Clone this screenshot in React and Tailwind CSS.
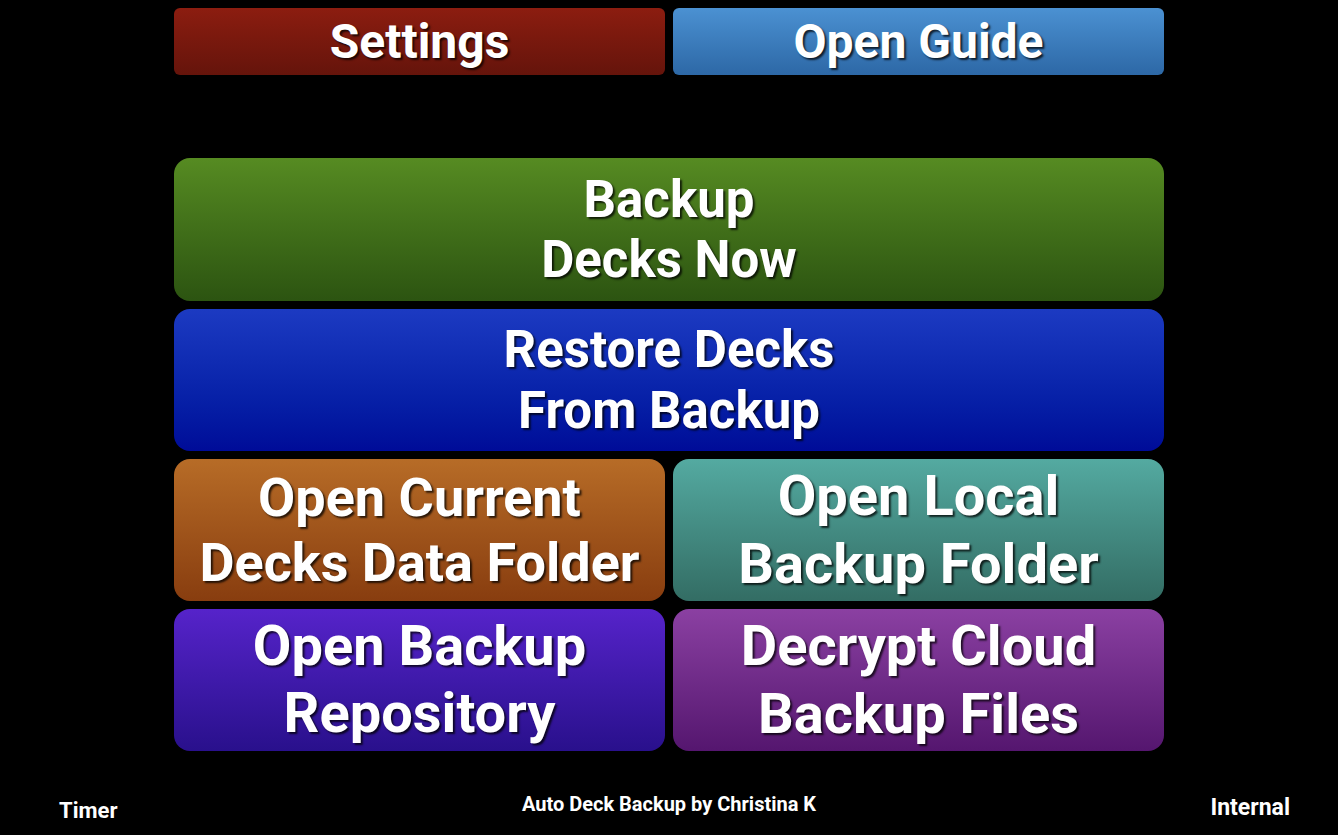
const shadow = '[text-shadow:2px_2px_2px_rgba(0,0,0,0.75)]'

function Btn({ children, className, text }) {
  return (
    <button
      className={`flex items-center justify-center text-center font-bold text-white ${shadow} ${className} ${text}`}
    >
      <span>{children}</span>
    </button>
  )
}

export default function App() {
  return (
    <div
      className="h-[835px] w-[1338px] overflow-hidden bg-black"
      style={{ fontFamily: 'Roboto, "Liberation Sans", sans-serif' }}
    >
      <div className="mx-auto flex w-[990px] flex-col">
        <div className="mt-2 grid grid-cols-2 gap-2">
          <Btn className="h-[67px] rounded-md bg-gradient-to-b from-[#8c1d10] to-[#65140b]" text="text-[48px] leading-none">Settings</Btn>
          <Btn className="h-[67px] rounded-md bg-gradient-to-b from-[#4b91d2] to-[#2d68a6]" text="text-[48px] leading-none">Open Guide</Btn>
        </div>

        <div className="mt-[83px] flex flex-col gap-2">
          <Btn className="h-[143px] rounded-2xl bg-gradient-to-b from-[#568b22] to-[#2c5411]" text="text-[51px] leading-[60px]">
            Backup<br />Decks Now
          </Btn>
          <Btn className="h-[142px] rounded-2xl bg-gradient-to-b from-[#1c3ac2] to-[#000b98]" text="text-[51px] leading-[61px]">
            Restore Decks<br />From Backup
          </Btn>
          <div className="grid grid-cols-2 gap-2">
            <Btn className="h-[142px] rounded-2xl bg-gradient-to-b from-[#b76c27] to-[#883d0f]" text="text-[54px] leading-[65px]">
              Open Current<br />Decks Data Folder
            </Btn>
            <Btn className="h-[142px] rounded-2xl bg-gradient-to-b from-[#54aaa1] to-[#336d64]" text="text-[56px] leading-[68px]">
              Open Local<br />Backup Folder
            </Btn>
          </div>
          <div className="grid grid-cols-2 gap-2">
            <Btn className="h-[142px] rounded-2xl bg-gradient-to-b from-[#5623ca] to-[#29108c]" text="text-[56px] leading-[67px]">
              Open Backup<br />Repository
            </Btn>
            <Btn className="h-[142px] rounded-2xl bg-gradient-to-b from-[#8b40a2] to-[#55166f]" text="text-[56px] leading-[68px]">
              Decrypt Cloud<br />Backup Files
            </Btn>
          </div>
        </div>
      </div>

      <div className="grid grid-cols-3 items-start font-bold text-white">
        <div className="mt-[47px] pl-[59px] text-[22px] leading-[26px]">Timer</div>
        <div className="mt-[41px] text-center text-[20px] leading-[24px]">Auto Deck Backup by Christina K</div>
        <div className="mt-[43px] pr-[48px] text-right text-[23px] leading-[27px]">Internal</div>
      </div>
    </div>
  )
}
